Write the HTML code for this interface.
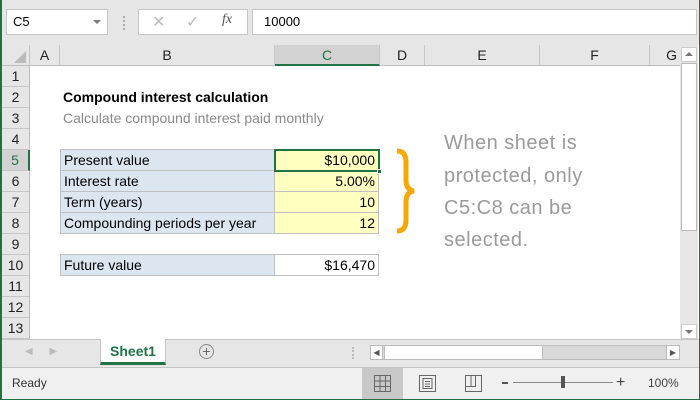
<!DOCTYPE html>
<html><head><style>
*{margin:0;padding:0;box-sizing:border-box}
body{width:700px;height:400px;position:relative;overflow:hidden;background:#fff;font-family:"Liberation Sans",sans-serif;font-size:13px;color:#000}
.a{position:absolute}
.ch{position:absolute;top:45px;height:21px;background:#e6e6e6;border-right:1px solid #c6c6c6;border-bottom:1px solid #bdbdbd;text-align:center;line-height:21px;font-size:14px;color:#222}
.rh{position:absolute;left:2px;width:28px;height:21px;background:#e6e6e6;border-bottom:1px solid #c6c6c6;border-right:1px solid #bdbdbd;text-align:center;line-height:21px;font-size:14px;color:#222}
.b{position:absolute;left:60px;width:215px;height:22px;background:#dce6f1;border:1px solid #c0c0c0;padding-left:3px;line-height:20px;font-size:14px}
.c{position:absolute;left:274px;width:105px;height:22px;background:#ffffc0;border:1px solid #c0c0c0;padding-right:3px;text-align:right;line-height:20px;font-size:14px}
.n{position:absolute;left:444px;color:#9a9a9a;font-size:20px;letter-spacing:0.5px}
</style></head><body>
<div class="a" style="left:0;top:0;width:700px;height:400px;border:1px solid #217346;border-left-width:2px"></div>
<div class="a" style="left:2px;top:0;width:697px;height:45px;background:#e6e6e6"></div>
<div class="a" style="left:6px;top:9px;width:102px;height:26px;background:#fff;border:1px solid #c6c6c6;padding-left:6px;line-height:24px;font-size:13px">C5</div>
<div class="a" style="left:93px;top:20px;border-left:4px solid transparent;border-right:4px solid transparent;border-top:4px solid #777"></div>
<div class="a" style="left:123px;top:16px;width:2px;height:14px;border-left:2px dotted #aaa"></div>
<div class="a" style="left:138px;top:9px;width:110px;height:26px;background:#fff;border:1px solid #c6c6c6"></div>
<div class="a" style="left:152px;top:12px;color:#bbb;font-size:16px">✕</div>
<div class="a" style="left:186px;top:12px;color:#bbb;font-size:16px">✓</div>
<div class="a" style="left:222px;top:12px;color:#555;font-size:14px;font-style:italic;font-family:'Liberation Serif',serif">fx</div>
<div class="a" style="left:252px;top:9px;width:445px;height:26px;background:#fff;border:1px solid #c6c6c6;padding-left:11px;line-height:24px;font-size:13px">10000</div>
<div class="ch" style="left:2px;width:28px"></div>
<div class="a" style="left:14px;top:51px;border-left:12px solid transparent;border-bottom:12px solid #bbb"></div>
<div class="ch" style="left:30px;width:30px">A</div>
<div class="ch" style="left:60px;width:215px">B</div>
<div class="ch" style="left:275px;width:105px;background:#d2d2d2;border-bottom:2px solid #217346;color:#217346">C</div>
<div class="ch" style="left:380px;width:45px">D</div>
<div class="ch" style="left:425px;width:115px">E</div>
<div class="ch" style="left:540px;width:110px">F</div>
<div class="ch" style="left:650px;width:30px;border-right:none;text-align:right;padding-right:3px">G</div>
<div class="ch" style="left:680px;width:18px;border:none"></div>
<div class="rh" style="top:66px">1</div><div class="rh" style="top:87px">2</div><div class="rh" style="top:108px">3</div><div class="rh" style="top:129px">4</div>
<div class="rh" style="top:150px;background:#d2d2d2;border-right:2px solid #217346;color:#217346">5</div>
<div class="rh" style="top:171px">6</div><div class="rh" style="top:192px">7</div><div class="rh" style="top:213px">8</div><div class="rh" style="top:234px">9</div><div class="rh" style="top:255px">10</div><div class="rh" style="top:276px">11</div><div class="rh" style="top:297px">12</div><div class="rh" style="top:318px">13</div>
<div class="a" style="left:63px;top:89px;font-weight:bold;font-size:14px">Compound interest calculation</div>
<div class="a" style="left:63px;top:110px;color:#8a8a8a;font-size:14px">Calculate compound interest paid monthly</div>
<div class="b" style="top:149px">Present value</div><div class="c" style="top:149px">$10,000</div>
<div class="b" style="top:170px">Interest rate</div><div class="c" style="top:170px">5.00%</div>
<div class="b" style="top:191px">Term (years)</div><div class="c" style="top:191px">10</div>
<div class="b" style="top:212px">Compounding periods per year</div><div class="c" style="top:212px">12</div>
<div class="a" style="left:274px;top:149px;width:106px;height:23px;border:2px solid #217346"></div>
<div class="a" style="left:377px;top:169px;width:5px;height:5px;background:#217346;border:1px solid #fff"></div>
<div class="b" style="top:254px">Future value</div><div class="c" style="top:254px;background:#fff">$16,470</div>
<svg class="a" style="left:392px;top:148px" width="30" height="86"><path d="M5 3 Q14 3 14 14 L14 32 Q14 42 22 43 Q14 44 14 54 L14 72 Q14 83 5 83" fill="none" stroke="#f7a800" stroke-width="5"/></svg>
<div class="n" style="top:132px">When sheet is</div>
<div class="n" style="top:165px">protected, only</div>
<div class="n" style="top:197px">C5:C8 can be</div>
<div class="n" style="top:229px">selected.</div>
<div class="a" style="left:680px;top:45px;width:18px;height:295px;background:#e6e6e6"></div>
<div class="a" style="left:681px;top:47px;width:16px;height:15px;background:#fff;border:1px solid #ccc"></div>
<div class="a" style="left:685px;top:52px;border-left:4px solid transparent;border-right:4px solid transparent;border-bottom:4px solid #777"></div>
<div class="a" style="left:681px;top:63px;width:16px;height:168px;background:#fff;border:1px solid #bbb"></div>
<div class="a" style="left:681px;top:324px;width:16px;height:15px;background:#fff;border:1px solid #ccc"></div>
<div class="a" style="left:685px;top:330px;border-left:4px solid transparent;border-right:4px solid transparent;border-top:4px solid #777"></div>
<div class="a" style="left:2px;top:339px;width:697px;height:28px;background:#e6e6e6;border-top:1px solid #c6c6c6"></div>
<div class="a" style="left:25px;top:346px;color:#bbb;font-size:10px">◀&nbsp;&nbsp;&nbsp;&nbsp;&nbsp;&nbsp;▶</div>
<div class="a" style="left:100px;top:339px;width:66px;height:26px;background:#fff;border-left:1px solid #c6c6c6;border-right:1px solid #c6c6c6;border-bottom:3px solid #217346;color:#217346;font-weight:bold;font-size:14px;text-align:center;line-height:24px">Sheet1</div>
<div class="a" style="left:199px;top:344px;width:15px;height:15px;border:1px solid #888;border-radius:50%;text-align:center;line-height:12px;color:#666;font-size:14px">+</div>
<div class="a" style="left:352px;top:347px;width:2px;height:12px;border-left:2px dotted #bbb"></div>
<div class="a" style="left:370px;top:345px;width:310px;height:15px;background:#d8d8d8;border:1px solid #bbb"></div>
<div class="a" style="left:370px;top:345px;width:13px;height:15px;background:#fff;border:1px solid #bbb;font-size:8px;color:#555;text-align:center;line-height:13px">◀</div>
<div class="a" style="left:384px;top:345px;width:159px;height:15px;background:#fff;border:1px solid #bbb"></div>
<div class="a" style="left:666px;top:345px;width:14px;height:15px;background:#fff;border:1px solid #bbb;font-size:8px;color:#555;text-align:center;line-height:13px">▶</div>
<div class="a" style="left:2px;top:367px;width:697px;height:32px;background:#f0f0f0;border-top:1px solid #c6c6c6"></div>
<div class="a" style="left:12px;top:376px;font-size:12px;color:#333">Ready</div>
<div class="a" style="left:362px;top:368px;width:41px;height:31px;background:#c8c8c8"></div>
<svg class="a" style="left:374px;top:375px" width="18" height="18"><path d="M.5 .5h16v16h-16zM.5 6h16M.5 11.5h16M6 .5v16M11.5 .5v16" fill="none" stroke="#666"/></svg>
<svg class="a" style="left:419px;top:375px" width="18" height="18"><path d="M.5 .5h16v16h-16zM4 3.5h9v10h-9zM6 6.5h5M6 9h5M6 11.5h5" fill="none" stroke="#666"/></svg>
<svg class="a" style="left:465px;top:375px" width="18" height="18"><path d="M.5 .5h16v16h-16zM.5 11.5h10v-11M6 .5v11" fill="none" stroke="#666"/></svg>
<div class="a" style="left:502px;top:382px;width:6px;height:2px;background:#555"></div>
<div class="a" style="left:513px;top:382px;width:100px;height:1px;background:#888"></div>
<div class="a" style="left:561px;top:376px;width:4px;height:12px;background:#555"></div>
<div class="a" style="left:616px;top:374px;font-size:16px;color:#444">+</div>
<div class="a" style="left:648px;top:376px;font-size:12px;color:#444">100%</div>
</body></html>
